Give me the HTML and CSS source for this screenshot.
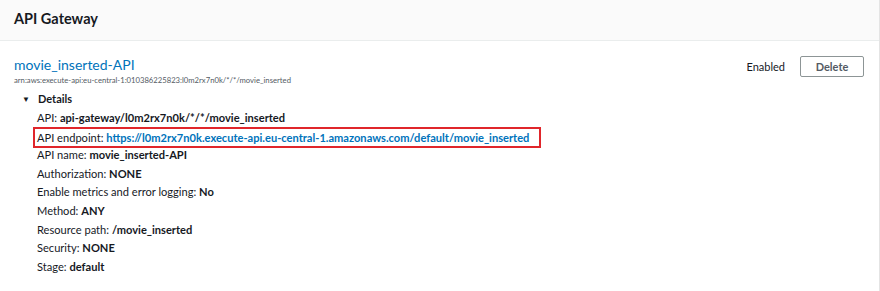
FILE: index.html
```html
<!DOCTYPE html>
<html lang="en">
<head>
  <meta charset="UTF-8">
  <title>API Gateway</title>
  <link rel="stylesheet" href="styles.css">
</head>
<body>
  <div class="panel">
    <div class="panel-header">API Gateway</div>
    <div class="panel-body">
      <div class="trigger">
        <div class="trigger-main">
          <a class="trigger-name" href="#">movie_inserted-API</a>
          <div class="arn">arn:aws:execute-api:eu-central-1:010386225823:l0m2rx7n0k/*/*/movie_inserted</div>
          <div class="details-toggle"><span class="caret">&#9660;</span>Details</div>
          <ul class="details">
            <li>API: <b>api-gateway/l0m2rx7n0k/*/*/movie_inserted</b></li>
            <li><span class="highlight">API endpoint: <a href="#">https://l0m2rx7n0k.execute-api.eu-central-1.amazonaws.com/default/movie_inserted</a></span></li>
            <li>API name: <b>movie_inserted-API</b></li>
            <li>Authorization: <b>NONE</b></li>
            <li>Enable metrics and error logging: <b>No</b></li>
            <li>Method: <b>ANY</b></li>
            <li>Resource path: <b>/movie_inserted</b></li>
            <li>Security: <b>NONE</b></li>
            <li>Stage: <b>default</b></li>
          </ul>
        </div>
        <div class="trigger-actions">
          <span class="status">Enabled</span>
          <button class="btn">Delete</button>
        </div>
      </div>
    </div>
  </div>
</body>
</html>
```

FILE: styles.css
```css
body {
  margin: 0;
  font-family: Lato, "Liberation Sans", Arial, sans-serif;
  color: #16191f;
  background: #ffffff;
}
.panel {
  border-right: 1px solid #e4e4e4;
  height: 291px;
  box-sizing: border-box;
}
.panel-header {
  height: 41px;
  box-sizing: border-box;
  padding: 10px 14px 0;
  background-color: #fafafa;
  border-bottom: 1px solid #eaeded;
  font-size: 14.5px;
  font-weight: bold;
  color: #16191f;
}
.panel-body {
  padding: 14px 15px 0 14px;
}
.trigger {
  display: flex;
  justify-content: space-between;
  align-items: flex-start;
}
.trigger-name {
  display: block;
  font-size: 14px;
  color: #0073bb;
  text-decoration: none;
  line-height: 20px;
}
.arn {
  font-size: 7.7px;
  color: #545b64;
  line-height: 10px;
  margin-top: 0;
}
.details-toggle {
  font-size: 11px;
  font-weight: bold;
  margin-top: 6px;
  line-height: 16px;
  padding-left: 8px;
}
.caret {
  font-size: 8px;
  margin-right: 8px;
  position: relative;
  top: -1px;
}
.details {
  list-style: none;
  margin: 1px 0 0;
  padding: 0 0 0 23px;
  font-size: 11.1px;
}
.details li {
  line-height: 18.6px;
  height: 18.6px;
}
.details b {
  font-weight: bold;
}
.details a {
  color: #0073bb;
  font-weight: bold;
  text-decoration: none;
}
.highlight {
  display: inline-block;
  border: 2px solid #e0262b;
  margin: -1px 0 0 -4px;
  padding: 0 10px 0 2px;
  line-height: 17px;
}
.trigger-actions {
  display: flex;
  align-items: center;
  gap: 15px;
  margin-top: 1px;
}
.status {
  font-size: 11px;
}
.btn {
  font-family: Lato, "Liberation Sans", Arial, sans-serif;
  font-size: 11px;
  font-weight: bold;
  color: #545b64;
  background: #fff;
  border: 1px solid #8d9596;
  border-radius: 2px;
  width: 64px;
  height: 21px;
  padding: 0;
}
```
